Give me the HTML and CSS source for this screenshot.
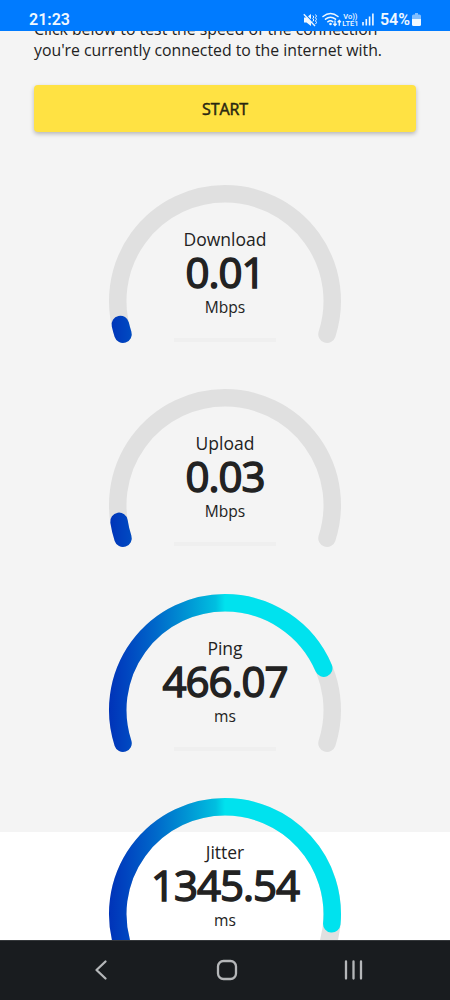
FILE: index.html
```html
<!DOCTYPE html>
<html lang="en">
<head>
<meta charset="utf-8">
<title>Speed test</title>
<link rel="stylesheet" href="styles.css">
</head>
<body>
<div class="phone">
  <header class="status">
    <span class="clock">21:23</span>
    <div class="indicators">
      <svg class="mute" width="14" height="14" viewBox="0 0 14 14"><path d="M1 4.500h2.500L8 1v12L3.500 9.500H1z" fill="currentColor"/><path d="M1.500.5 12.500 12" stroke="#007bff" stroke-width="1.200"/><path d="M.8 1.300 12 13" stroke="currentColor" stroke-width="1.300"/><path d="M9.800 2.500l1 1.500-1 1.500 1 1.500-1 1.500M12.500 1.500l1 1.600-1 1.600 1 1.600-1 1.600 1 1.600-1 1.600" stroke="currentColor" fill="none"/></svg>
      <svg class="wifi" width="20" height="15" viewBox="0 0 20 15"><path d="M1 4.500q7.500-6 15 0M3.500 7.200q5-4 10 0M5.800 9.800q2.700-2.200 5 0" stroke="currentColor" stroke-width="1.500" fill="none" stroke-linecap="round"/><circle cx="8.500" cy="12" r="1.300" fill="currentColor"/><path d="M13 8.500v5m-1.600-1.700 1.600 1.800 1.600-1.800M17.300 13.700v-5M15.700 10.300l1.600-1.800 1.600 1.800" stroke="currentColor" stroke-width="1.300" fill="none"/></svg>
      <span class="volte"><span>Vo))</span><span>LTE1</span></span>
      <svg class="signal" width="12" height="13" viewBox="0 0 12 13"><path d="M1 9v3.500M4.300 6v6.500M7.600 3.500v9M10.900.5v12" stroke="currentColor" stroke-width="1.600"/></svg>
      <span class="percent">54%</span>
      <svg class="battery" width="9" height="13" viewBox="0 0 9 13"><path d="M3 0h3v1.500h1.500Q9 1.500 9 3v3H0V3q0-1.500 1.500-1.500H3z" fill="#80bdff"/><path d="M0 6h9v5.500Q9 13 7.500 13h-6Q0 13 0 11.500z" fill="currentColor"/></svg>
    </div>
  </header>
  <main class="page">
    <section class="content">
      <p class="intro">Click below to test the speed of the connection<br>you're currently connected to the internet with.</p>
      <button class="start">START</button>
      <div class="gauges">
        <article class="gauge">
          <svg class="dial" viewBox="0 0 232 160">
            <defs><linearGradient id="blue" gradientUnits="userSpaceOnUse" x1="0" y1="0" x2="116" y2="0"><stop offset="0" stop-color="#0033b8"/><stop offset=".15" stop-color="#0045c0"/><stop offset=".4" stop-color="#0068ca"/><stop offset=".65" stop-color="#0091d3"/><stop offset=".92" stop-color="#00bfe0"/><stop offset="1" stop-color="#00e2ee"/></linearGradient></defs>
            <path class="track" d="M14 149.200A107.250 107.250 0 1 1 218 149.200"/>
            <path class="value" pathLength="216" stroke-dasharray="5.4 400" d="M14 149.200A107.250 107.250 0 1 1 218 149.200"/>
          </svg>
          <div class="reading"><span class="name">Download</span><strong class="number">0.01</strong><span class="unit">Mbps</span><i class="rule"></i></div>
        </article>
        <article class="gauge">
          <svg class="dial" viewBox="0 0 232 160">
            <path class="track" d="M14 149.200A107.250 107.250 0 1 1 218 149.200"/>
            <path class="value" pathLength="216" stroke-dasharray="9.3 400" d="M14 149.200A107.250 107.250 0 1 1 218 149.200"/>
          </svg>
          <div class="reading"><span class="name">Upload</span><strong class="number">0.03</strong><span class="unit">Mbps</span><i class="rule"></i></div>
        </article>
        <article class="gauge">
          <svg class="dial" viewBox="0 0 232 160">
            <path class="track" d="M14 149.200A107.250 107.250 0 1 1 218 149.200"/>
            <path class="value" pathLength="216" stroke-dasharray="175 400" d="M14 149.200A107.250 107.250 0 1 1 218 149.200"/>
          </svg>
          <div class="reading"><span class="name">Ping</span><strong class="number">466.07</strong><span class="unit">ms</span><i class="rule"></i></div>
        </article>
        <article class="gauge">
          <svg class="dial" viewBox="0 0 232 160">
            <path class="track" d="M14 149.200A107.250 107.250 0 1 1 218 149.200"/>
            <path class="value" pathLength="216" stroke-dasharray="203.2 400" d="M14 149.200A107.250 107.250 0 1 1 218 149.200"/>
          </svg>
          <div class="reading"><span class="name">Jitter</span><strong class="number">1345.54</strong><span class="unit">ms</span><i class="rule"></i></div>
        </article>
      </div>
    </section>
  </main>
  <nav class="navbar">
    <svg width="20" height="24" viewBox="0 0 20 24"><path d="M14.500 3.500 5.500 12l9 8.500" /></svg>
    <svg width="24" height="24" viewBox="0 0 24 24"><rect x="3" y="3" width="18" height="18" rx="5.500"/></svg>
    <svg width="24" height="24" viewBox="0 0 24 24"><path d="M4 3.500v17M11.500 3.500v17M19 3.500v17"/></svg>
  </nav>
</div>
</body>
</html>
```
FILE: styles.css
```css
* { box-sizing: border-box; }
body { margin: 0; background: #fff; color: #222; font-family: "Open Sans", "Noto Sans", sans-serif; }
.phone { width: 450px; height: 1000px; display: flex; flex-direction: column; overflow: hidden; }
.status { flex: none; height: 31px; padding: 8px 29px 0 29px; display: flex; justify-content: space-between; background: #007bff; color: #f0f8ff; font-family: Roboto, sans-serif; }
.clock { font-size: 16px; font-weight: 600; line-height: 23px; }
.indicators { display: flex; align-items: center; height: 23px; }
.wifi { margin-left: 5px; }
.volte { display: flex; flex-direction: column; align-items: center; width: 17px; font-size: 7.5px; line-height: 7px; font-weight: 500; }
.signal { margin-left: 3px; }
.percent { font-size: 16px; font-weight: 600; margin-left: 6px; }
.battery { margin-left: 2px; }
.page { flex: 1; min-height: 0; overflow: hidden; background: #fff; }
.content { display: flow-root; height: 801px; background: #f4f4f4; padding: 0 34px; }
.intro { margin: -12px 0 0; font-size: 15.82px; line-height: 21px; white-space: nowrap; }
.start { display: block; width: 100%; height: 47px; margin-top: 24px; border: 0; border-radius: 4px; background: #ffe243; box-shadow: 0 2px 4px rgba(0,0,0,.25); color: #292711; font: 400 16px "Open Sans", sans-serif; letter-spacing: -.1px; -webkit-text-stroke: .5px; }
.gauges { display: grid; grid-auto-rows: 204.6px; justify-content: center; padding-top: 52.5px; }
.gauge { display: grid; grid-template-columns: 232px; }
.dial, .reading { grid-area: 1 / 1; }
.dial { width: 232px; height: 160px; overflow: visible; }
.track, .value { fill: none; stroke-width: 17.5; stroke-linecap: round; }
.track { stroke: #e0e0e0; }
.value { stroke: url(#blue); }
.reading { display: flex; flex-direction: column; align-items: center; padding-top: 42px; }
.name { font-size: 17.5px; line-height: 25px; }
.number { font-size: 42px; line-height: 40px; font-weight: 400; letter-spacing: -1px; -webkit-text-stroke: 1.5px #222; }
.unit { font-size: 15.6px; line-height: 30px; }
.rule { width: 102px; height: 4px; margin-top: 16px; background: #efefef; }
.navbar { flex: none; height: 60px; display: flex; align-items: center; justify-content: space-between; padding: 0 84px 2px 91px; background: #191c1f; border-top: 1px solid #35383b; }
.navbar svg { fill: none; stroke: #b5b7b9; stroke-width: 2.3; stroke-linecap: round; stroke-linejoin: round; }
```
